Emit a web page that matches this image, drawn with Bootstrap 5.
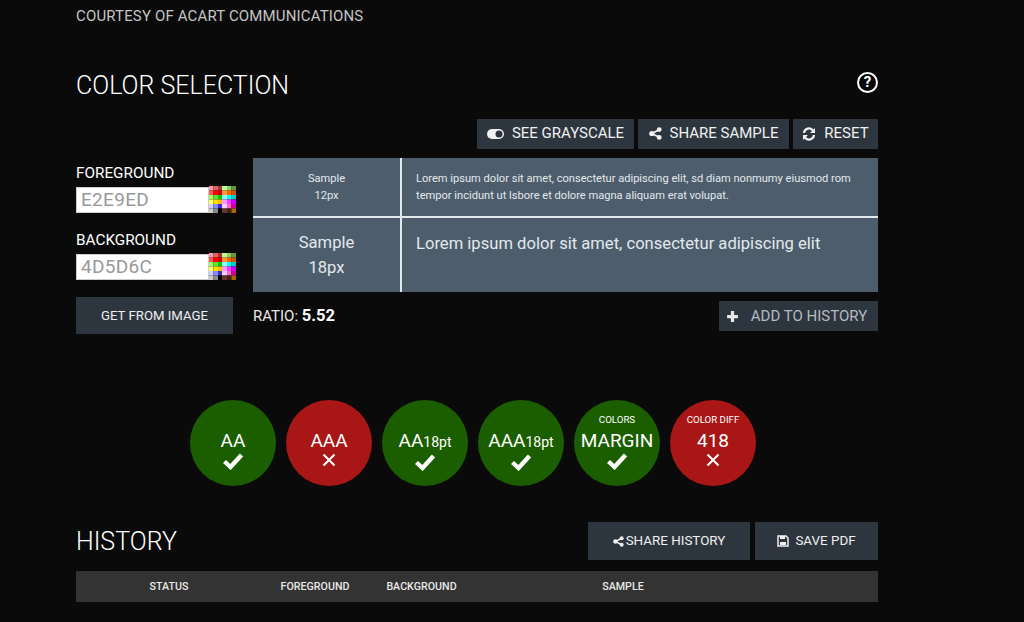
<!DOCTYPE html>
<html lang="en">
<head>
<meta charset="UTF-8">
<title>Color Selection</title>
<link rel="stylesheet" href="https://cdn.jsdelivr.net/npm/bootstrap@5.3.0/dist/css/bootstrap.min.css">
<style>
    html, body { height: 622px; overflow: hidden; }
    body { background: #0a0a0a; color: #e8e8e8; font-family: Roboto, "Liberation Sans", Arial, sans-serif; }
    .page-wrap { width: 802px; margin-left: 76px; }
    .courtesy { height: 32px; line-height: 32px; font-size: 15px; color: #c4c4c4; margin: 0; letter-spacing: .15px; }
    .main-title { font-size: 25px; line-height: 30px; font-weight: 300; color: #fff; margin: 0; padding-top: 1px; }
    .history-row .main-title { padding-top: 2px; }
    .title-row { padding-top: 38px; height: 87px; }
    .help-dot { width: 21px; height: 21px; margin-top: 2px; border: 2.5px solid #fff; border-radius: 50%; color: #fff; font-size: 15px; font-weight: 700; line-height: 16px; text-align: center; }
    .tool-row { gap: 4px; height: 39px; }
    .dark-btn { background: #2d353e; border: 0; border-radius: 0; color: #f0f0f0; font-size: 15px; font-weight: 400; display: flex; align-items: center; justify-content: center; padding: 0; }
    .dark-btn:hover { background: #2d353e; color: #f0f0f0; }
    .tool-row .dark-btn { height: 30px; padding-bottom: 1px; }
    .btn-gray { width: 157px; }
    .btn-share { width: 151px; }
    .btn-reset { width: 85px; }
    .left-col { width: 157px; margin-right: 20px; flex: none; }
    .field-label { font-size: 15.300px; font-weight: 400; color: #fff; line-height: 18px; margin: 6px 0 5px; display: block; }
    .field-row { margin-bottom: 18px; height: 26px; width: 160px; }
    .hex-input { width: 133px; height: 26px; flex: none; border: 1px solid #ccc; border-radius: 0; background: #fff; color: #999; font-size: 19px; padding: 0 4px; font-family: inherit; letter-spacing: .3px; }
    .swatch { width: 27px; height: 27px; flex: none; margin-top: -1px; display: block; }
    .get-btn { width: 157px; height: 37px; margin-top: -1px; font-size: 13.200px; }
    .sample-box { width: 625px; height: 134px; background: #4d5d6c; color: #e2e9ed; display: grid; grid-template-columns: 149px 1fr; grid-template-rows: 60px 1fr; }
    .sample-cell { display: flex; align-items: center; justify-content: center; text-align: center; }
    .sample-text { padding-left: 14px; padding-right: 15px; }
    .sz12 { font-size: 11.100px; line-height: 17px; }
    .sz18 { font-size: 16.600px; line-height: 25px; }
    .sample-lead { padding-top: 13px; }
    .line-r { border-right: 2px solid #e2e9ed; }
    .line-b { border-bottom: 2px solid #e2e9ed; }
    .ratio-row { height: 30px; margin-top: 9px; }
    .ratio-label { font-size: 15px; color: #e8e8e8; padding-top: 1px; }
    .ratio-label b { font-size: 16.500px; font-weight: 700; color: #fff; }
    .add-btn { width: 159px; height: 30px; padding-right: 4px; gap: 12px; color: #b4bbc2; }
    .circle-row { gap: 10px; margin-top: 66px; padding-right: 8px; height: 86px; }
    .test-dot { width: 86px; height: 86px; padding-top: 31px; border-radius: 50%; color: #fff; font-size: 19px; line-height: 20px; display: flex; flex-direction: column; align-items: center; }
    .dot-pass { background: #1b5e00; }
    .dot-fail { background: #a81616; }
    .test-dot small { font-size: 14px; }
    .test-dot svg { flex: none; }
    .dot-top { height: 14px; font-size: 9.700px; line-height: 14px; margin-top: -18px; margin-bottom: 4px; }
    .icon-gap { margin-top: 2px; }
    .check-gap { margin-top: 1px; }
    .history-row { margin-top: 36px; height: 38px; }
    .hist-btns { gap: 5px; }
    .hist-btns .dark-btn { height: 38px; font-size: 13.400px; gap: 2px; }
    .btn-hist { width: 162px; }
    .btn-pdf { width: 123px; }
    .hist-table { margin-top: 11px; height: 31px; padding-top: 1px; background: #333; font-size: 10.700px; font-weight: 500; color: #e8e8e8; display: grid; grid-template-columns: 186px 106px 107px 296px 107px; align-items: center; text-align: center; }
</style>
</head>
<body>
<svg width="0" height="0" class="position-absolute">
    <symbol id="pal" viewBox="0 0 27 27">
        <rect x="0" width="4.500" height="4.500" fill="#f9a"/><rect x="4.500" width="4.500" height="4.500" fill="#d66"/><rect x="9" width="4" height="4.500" fill="#a33"/>
        <rect x="13" width="5" height="4.500" fill="#bf9"/><rect x="18" width="4.500" height="4.500" fill="#9c6"/><rect x="22.500" width="4.500" height="4.500" fill="#693"/>
        <rect x="0" y="4.500" width="4.500" height="4.500" fill="#f55"/><rect x="4.500" y="4.500" width="4.500" height="4.500" fill="#f00"/><rect x="9" y="4.500" width="4" height="4.500" fill="#c00"/>
        <rect x="13" y="4.500" width="5" height="4.500" fill="#f93"/><rect x="18" y="4.500" width="4.500" height="4.500" fill="#f60"/><rect x="22.500" y="4.500" width="4.500" height="4.500" fill="#c50"/>
        <rect x="0" y="9" width="4.500" height="4.500" fill="#9f6"/><rect x="4.500" y="9" width="4.500" height="4.500" fill="#6d3"/><rect x="9" y="9" width="4" height="4.500" fill="#0c0"/>
        <rect x="13" y="9" width="5" height="4.500" fill="#9ff"/><rect x="18" y="9" width="4.500" height="4.500" fill="#0ff"/><rect x="22.500" y="9" width="4.500" height="4.500" fill="#0cc"/>
        <rect x="0" y="13.500" width="4.500" height="4.500" fill="#ff6"/><rect x="4.500" y="13.500" width="4.500" height="4.500" fill="#fd0"/><rect x="9" y="13.500" width="4" height="4.500" fill="#fb0"/>
        <rect x="13" y="13.500" width="5" height="4.500" fill="#f9f"/><rect x="18" y="13.500" width="4.500" height="4.500" fill="#f3f"/><rect x="22.500" y="13.500" width="4.500" height="4.500" fill="#c0f"/>
        <rect x="0" y="18" width="4.500" height="4.500" fill="#ccf"/><rect x="4.500" y="18" width="4.500" height="4.500" fill="#88f"/><rect x="9" y="18" width="4" height="4.500" fill="#33c"/>
        <rect x="13" y="18" width="5" height="4.500" fill="#fcf"/><rect x="18" y="18" width="4.500" height="4.500" fill="#f6c"/><rect x="22.500" y="18" width="4.500" height="4.500" fill="#c09"/>
        <rect x="0" y="22.500" width="4.500" height="4.500" fill="#ccc"/><rect x="4.500" y="22.500" width="4.500" height="4.500" fill="#888"/><rect x="9" y="22.500" width="4" height="4.500" fill="#000"/>
        <rect x="13" y="22.500" width="5" height="4.500" fill="#633"/><rect x="18" y="22.500" width="4.500" height="4.500" fill="#421"/><rect x="22.500" y="22.500" width="4.500" height="4.500" fill="#a60"/>
    </symbol>
    <symbol id="ic-share" viewBox="0 0 14 14">
        <path d="M3 7 11 3M3 7l8 4" stroke="currentColor" stroke-width="2" fill="none"/>
        <circle cx="3" cy="7" r="2.800" fill="currentColor"/><circle cx="11" cy="2.800" r="2.600" fill="currentColor"/><circle cx="11" cy="11.200" r="2.600" fill="currentColor"/>
    </symbol>
    <symbol id="ic-check" viewBox="0 0 22 18">
        <path d="M2.500 9.500 8.500 15 19.500 3" stroke="#fff" stroke-width="4.400" fill="none"/>
    </symbol>
    <symbol id="ic-x" viewBox="0 0 14 14">
        <path d="M1.500 1.500 12.500 12.500M12.500 1.500 1.500 12.500" stroke="#fff" stroke-width="2" fill="none"/>
    </symbol>
</svg>

<div class="page-wrap">
    <p class="courtesy">COURTESY OF ACART COMMUNICATIONS</p>

    <div class="title-row d-flex justify-content-between">
        <h2 class="main-title">COLOR SELECTION</h2>
        <div class="help-dot">?</div>
    </div>

    <div class="tool-row d-flex justify-content-end">
        <button class="btn dark-btn btn-gray">
            <svg width="17" height="10" viewBox="0 0 17 10" class="me-2"><rect width="17" height="10" rx="5" fill="#f0f0f0"/><circle cx="12" cy="5" r="3.500" fill="#2d353e"/></svg>SEE GRAYSCALE
        </button>
        <button class="btn dark-btn btn-share">
            <svg width="13" height="13" class="me-2"><use href="#ic-share"/></svg>SHARE SAMPLE
        </button>
        <button class="btn dark-btn btn-reset">
            <svg width="14" height="14" viewBox="0 0 14 14" class="me-2"><path d="M2 6A5 5 0 0 1 11 3.500M12 8A5 5 0 0 1 3 10.500" stroke="currentColor" stroke-width="2.200" fill="none"/><path d="M13 1v5H8zM1 13V8h5z" fill="currentColor"/></svg>RESET
        </button>
    </div>

    <div class="d-flex">
        <div class="left-col">
            <label class="field-label">FOREGROUND</label>
            <div class="field-row d-flex">
                <input class="hex-input" type="text" value="E2E9ED">
                <svg class="swatch"><use href="#pal"/></svg>
            </div>
            <label class="field-label">BACKGROUND</label>
            <div class="field-row d-flex">
                <input class="hex-input" type="text" value="4D5D6C">
                <svg class="swatch"><use href="#pal"/></svg>
            </div>
            <button class="btn dark-btn get-btn">GET FROM IMAGE</button>
        </div>

        <div class="flex-grow-1">
            <div class="sample-box">
                <div class="sample-cell sz12 line-r line-b">Sample<br>12px</div>
                <div class="sample-cell sample-text sz12 line-b text-start">Lorem ipsum dolor sit amet, consectetur adipiscing elit, sd diam nonmumy eiusmod rom tempor incidunt ut lsbore et dolore magna aliquam erat volupat.</div>
                <div class="sample-cell sz18 line-r">Sample<br>18px</div>
                <div class="sample-text sample-lead sz18 text-start">Lorem ipsum dolor sit amet, consectetur adipiscing elit</div>
            </div>
            <div class="ratio-row d-flex justify-content-between align-items-center">
                <div class="ratio-label">RATIO: <b>5.52</b></div>
                <button class="btn dark-btn add-btn">
                    <svg width="13" height="13" viewBox="0 0 12 12"><path d="M6 1v10M1 6h10" stroke="#e8e8e8" stroke-width="3"/></svg>ADD TO HISTORY
                </button>
            </div>
        </div>
    </div>

    <div class="circle-row d-flex justify-content-center">
        <div class="test-dot dot-pass">AA<svg class="check-gap" width="22" height="18"><use href="#ic-check"/></svg></div>
        <div class="test-dot dot-fail">AAA<svg class="icon-gap" width="14" height="14"><use href="#ic-x"/></svg></div>
        <div class="test-dot dot-pass"><span>AA<small>18pt</small></span><svg class="check-gap" width="22" height="18"><use href="#ic-check"/></svg></div>
        <div class="test-dot dot-pass"><span>AAA<small>18pt</small></span><svg class="check-gap" width="22" height="18"><use href="#ic-check"/></svg></div>
        <div class="test-dot dot-pass"><span class="dot-top">COLORS</span>MARGIN<svg class="check-gap" width="22" height="18"><use href="#ic-check"/></svg></div>
        <div class="test-dot dot-fail"><span class="dot-top">COLOR DIFF</span>418<svg class="icon-gap" width="14" height="14"><use href="#ic-x"/></svg></div>
    </div>

    <div class="history-row d-flex justify-content-between align-items-center">
        <h2 class="main-title">HISTORY</h2>
        <div class="hist-btns d-flex">
            <button class="btn dark-btn btn-hist"><svg width="11" height="11"><use href="#ic-share"/></svg>SHARE HISTORY</button>
            <button class="btn dark-btn btn-pdf">
                <svg width="12" height="12" viewBox="0 0 12 12" class="me-1"><path d="M1 1h8l2 2v8H1z" fill="none" stroke="#f0f0f0" stroke-width="1.500"/><rect x="3" y="1" width="5" height="3" fill="#f0f0f0"/><rect x="3" y="7" width="6" height="3" fill="#f0f0f0"/></svg>SAVE PDF
            </button>
        </div>
    </div>

    <div class="hist-table">
        <div>STATUS</div>
        <div>FOREGROUND</div>
        <div>BACKGROUND</div>
        <div>SAMPLE</div>
        <div></div>
    </div>
</div>
<script src="https://cdn.jsdelivr.net/npm/bootstrap@5.3.0/dist/js/bootstrap.bundle.min.js"></script>
</body>
</html>
